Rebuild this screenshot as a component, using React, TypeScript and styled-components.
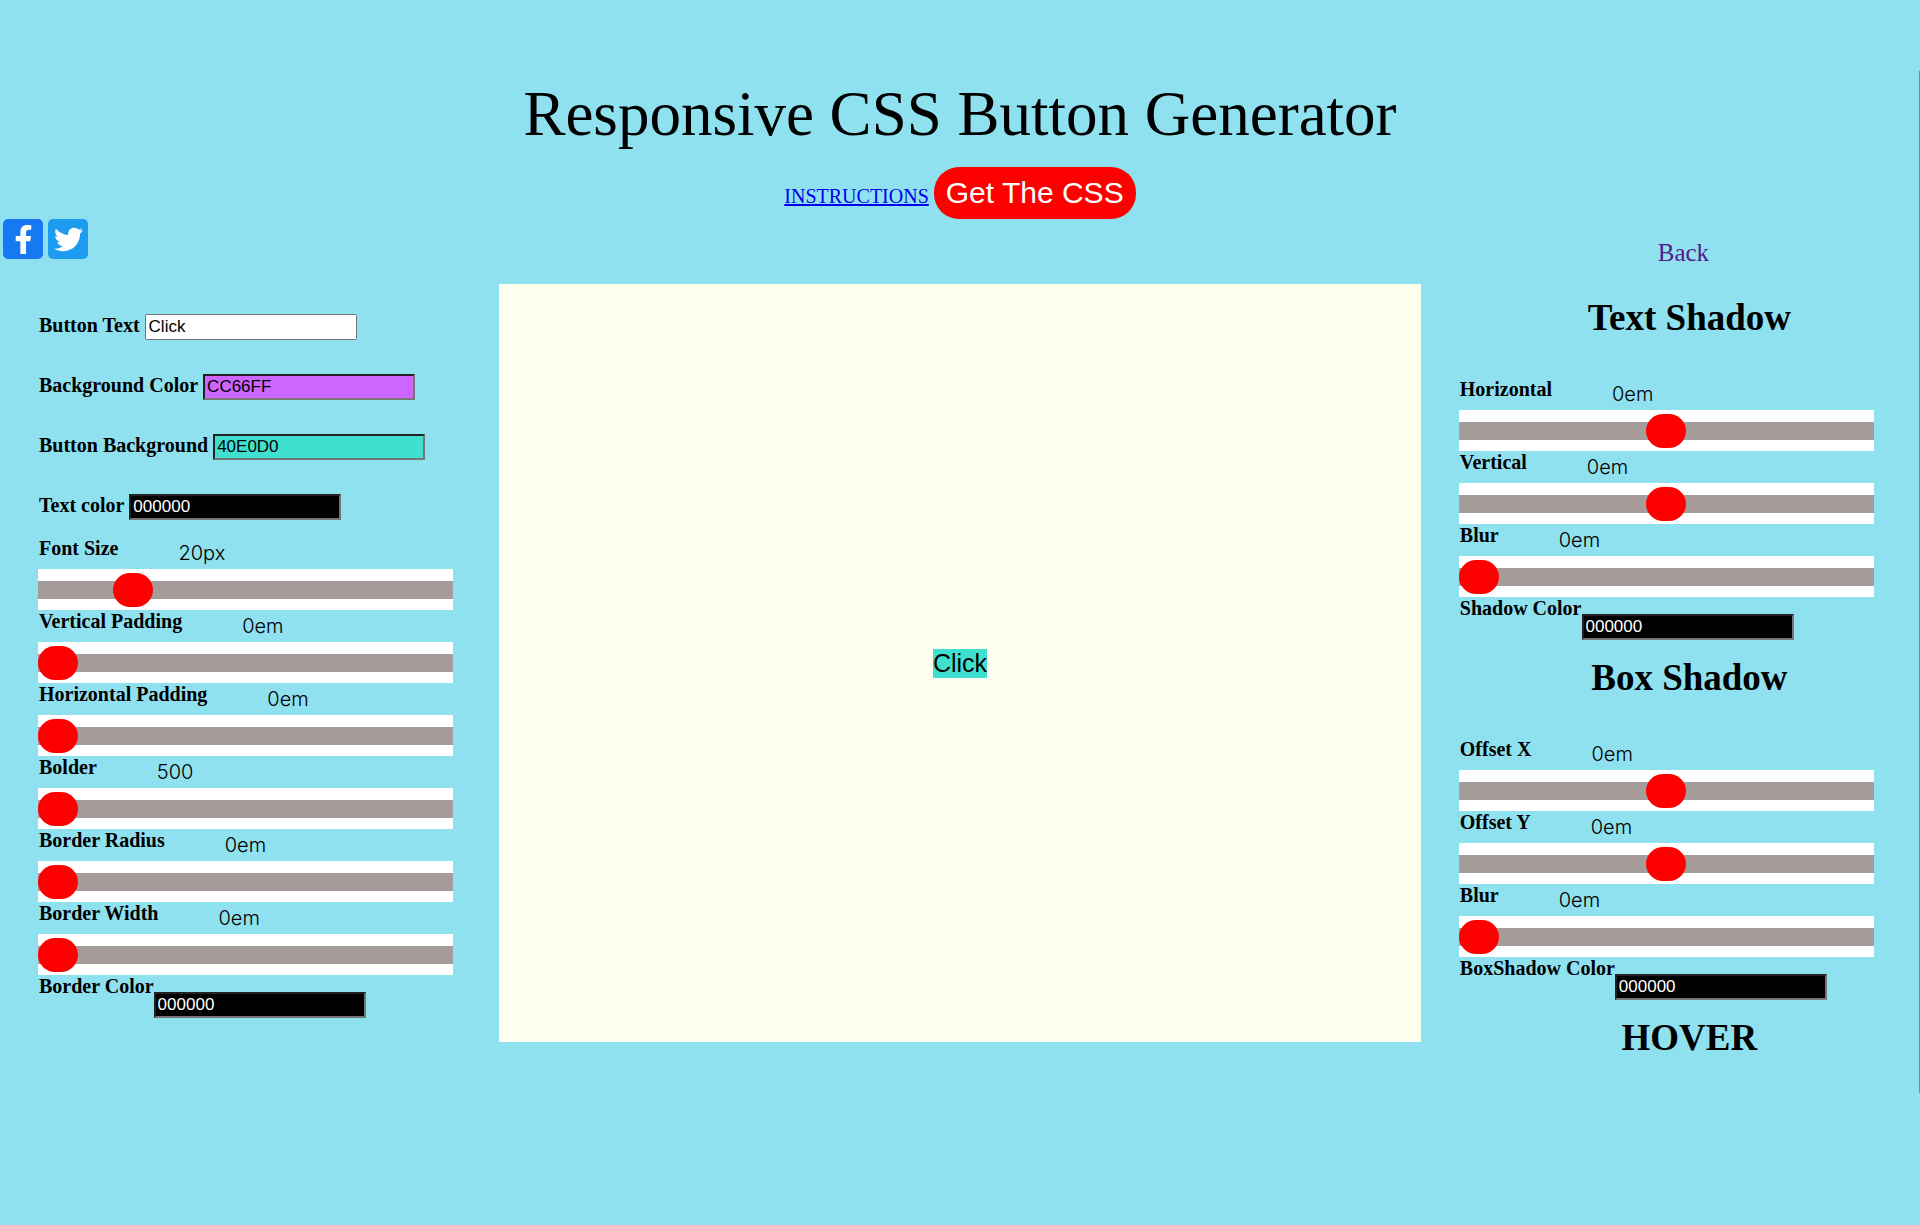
import { useId, useState } from 'react';
import styled, { createGlobalStyle, css } from 'styled-components';
import { FaFacebookF, FaTwitter } from 'react-icons/fa';

const serif = '"Liberation Serif", "Times New Roman", serif';
const sans = '"Liberation Sans", Arial, sans-serif';

const GlobalStyle = createGlobalStyle`
  * { box-sizing: border-box; }
  body {
    margin: 0;
    background: #8fe1ef;
    color: #000;
    font-family: ${serif};
  }
`;

const Page = styled.div`
  margin-top: 71px;
  padding: 7px 0 34px;
  box-shadow: inset -1px 0 #6391a8;
`;

const Header = styled.header`
  display: flex;
  flex-direction: column;
  align-items: center;
  gap: 17px;
`;

const Title = styled.h1`
  margin: 0;
  font-size: 63px;
  font-weight: 400;
  line-height: 72px;
  text-align: center;
`;

const Actions = styled.div`
  display: flex;
  align-items: baseline;
  gap: 5px;
`;

const InstructionsLink = styled.a`
  color: #0000ee;
  font-size: 20px;
`;

const GetCssButton = styled.button`
  height: 52px;
  padding: 0 12px;
  border: 0;
  border-radius: 25px;
  background: #f00;
  color: #fff;
  font: 30px ${sans};
  cursor: pointer;
`;

const Columns = styled.main`
  display: grid;
  grid-template-columns: 26fr 48fr 26fr;
  align-items: start;
`;

const SocialBar = styled.nav`
  display: flex;
  gap: 5px;
  padding-left: 3px;
`;

const SocialLink = styled.a<{ $color: string }>`
  display: flex;
  align-items: center;
  justify-content: center;
  width: 40px;
  height: 40px;
  border-radius: 5px;
  background: ${(p) => p.$color};
  color: #fff;
  font-size: 29px;
`;

const Controls = styled.div`
  padding: 0 46px 0 38px;
`;

const Fields = styled.div`
  display: flex;
  flex-direction: column;
  gap: 34px;
  padding: 55px 0 17px;
`;

const FieldRow = styled.div`
  display: flex;
  align-items: baseline;
  gap: 5px;
  height: 26px;
`;

const Label = styled.label`
  padding-left: 1px;
  font-size: 20px;
  font-weight: 700;
  line-height: 22px;
  white-space: nowrap;
`;

const TextInput = styled.input<{ $fill?: string; $ink?: string }>`
  width: 212px;
  height: 26px;
  padding: 1px 2px;
  font: 17px ${sans};
  ${(p) =>
    p.$fill &&
    css`
      background: ${p.$fill};
      color: ${p.$ink ?? '#000'};
    `}
`;

const SliderHead = styled.div`
  display: flex;
  align-items: flex-start;
  gap: 60px;
  height: 32px;
`;

const Value = styled.output`
  font: 300 20px/32px Inter, sans-serif;
`;

const Range = styled.input`
  display: block;
  width: 100%;
  height: 41px;
  margin: 0;
  appearance: none;
  background: #fff;

  &::-webkit-slider-runnable-track {
    height: 18px;
    background: #a59b99;
  }

  &::-webkit-slider-thumb {
    appearance: none;
    width: 40px;
    height: 34px;
    margin-top: -8px;
    border-radius: 17px;
    background: #f00;
  }
`;

const ColorRow = styled.div`
  display: flex;
  align-items: flex-start;
  height: 44px;

  ${TextInput} {
    margin-top: 17px;
  }
`;

const Preview = styled.section`
  display: flex;
  align-items: center;
  justify-content: center;
  height: 758px;
  margin-top: 65px;
  background: #fffff0;
`;

const PreviewButton = styled.button`
  padding: 0;
  border: 0;
  background: #40e0d0;
  color: #000;
  font: 25px/29px ${sans};
`;

const ShadowPanel = styled.section`
  padding-top: 20px;
`;

const BackLink = styled.a`
  display: block;
  margin: 0 0 14px 26px;
  color: #551a8b;
  font-size: 25px;
  line-height: 28px;
  text-align: center;
  text-decoration: none;
`;

const Heading = styled.h2<{ $last?: boolean }>`
  margin: 0;
  padding: 16px 0 ${(p) => (p.$last ? 0 : 39)}px 38px;
  font-size: 37px;
  line-height: 42px;
  text-align: center;
`;

interface SliderProps {
  label: string;
  unit?: string;
  min?: number;
  max?: number;
  initial?: number;
}

function Slider({ label, unit = 'em', min = 0, max = 10, initial = 0 }: SliderProps) {
  const id = useId();
  const [value, setValue] = useState(initial);
  return (
    <div>
      <SliderHead>
        <Label htmlFor={id}>{label}</Label>
        <Value htmlFor={id}>{`${value}${unit}`}</Value>
      </SliderHead>
      <Range
        id={id}
        type="range"
        min={min}
        max={max}
        value={value}
        onChange={(e) => setValue(Number(e.target.value))}
      />
    </div>
  );
}

interface FieldProps {
  label: string;
  initial: string;
  fill?: string;
  ink?: string;
}

function Field({ label, initial, fill, ink }: FieldProps) {
  const id = useId();
  return (
    <FieldRow>
      <Label htmlFor={id}>{label}</Label>
      <TextInput id={id} type="text" defaultValue={initial} $fill={fill} $ink={ink} />
    </FieldRow>
  );
}

function ColorField({ label }: { label: string }) {
  const id = useId();
  return (
    <ColorRow>
      <Label htmlFor={id}>{label}</Label>
      <TextInput id={id} type="text" defaultValue="000000" $fill="#000" $ink="#fff" />
    </ColorRow>
  );
}

export default function App() {
  return (
    <>
      <GlobalStyle />
      <Page>
        <Header>
          <Title>Responsive CSS Button Generator</Title>
          <Actions>
            <InstructionsLink href="#instructions">INSTRUCTIONS</InstructionsLink>
            <GetCssButton type="button">Get The CSS</GetCssButton>
          </Actions>
        </Header>
        <Columns>
          <section>
            <SocialBar>
              <SocialLink href="#facebook" aria-label="Facebook" $color="#1877f2">
                <FaFacebookF />
              </SocialLink>
              <SocialLink href="#twitter" aria-label="Twitter" $color="#1d9bf0">
                <FaTwitter />
              </SocialLink>
            </SocialBar>
            <Controls>
              <Fields>
                <Field label="Button Text" initial="Click" />
                <Field label="Background Color" initial="CC66FF" fill="#cc66ff" />
                <Field label="Button Background" initial="40E0D0" fill="#40e0d0" />
                <Field label="Text color" initial="000000" fill="#000" ink="#fff" />
              </Fields>
              <Slider label="Font Size" unit="px" max={100} initial={20} />
              <Slider label="Vertical Padding" />
              <Slider label="Horizontal Padding" />
              <Slider label="Bolder" unit="" min={500} max={900} initial={500} />
              <Slider label="Border Radius" />
              <Slider label="Border Width" />
              <ColorField label="Border Color" />
            </Controls>
          </section>
          <Preview>
            <PreviewButton type="button">Click</PreviewButton>
          </Preview>
          <ShadowPanel>
            <BackLink href="#back">Back</BackLink>
            <Heading>Text Shadow</Heading>
            <Controls>
              <Slider label="Horizontal" min={-5} max={5} />
              <Slider label="Vertical" min={-5} max={5} />
              <Slider label="Blur" />
              <ColorField label="Shadow Color" />
            </Controls>
            <Heading>Box Shadow</Heading>
            <Controls>
              <Slider label="Offset X" min={-5} max={5} />
              <Slider label="Offset Y" min={-5} max={5} />
              <Slider label="Blur" />
              <ColorField label="BoxShadow Color" />
            </Controls>
            <Heading $last>HOVER</Heading>
          </ShadowPanel>
        </Columns>
      </Page>
    </>
  );
}
